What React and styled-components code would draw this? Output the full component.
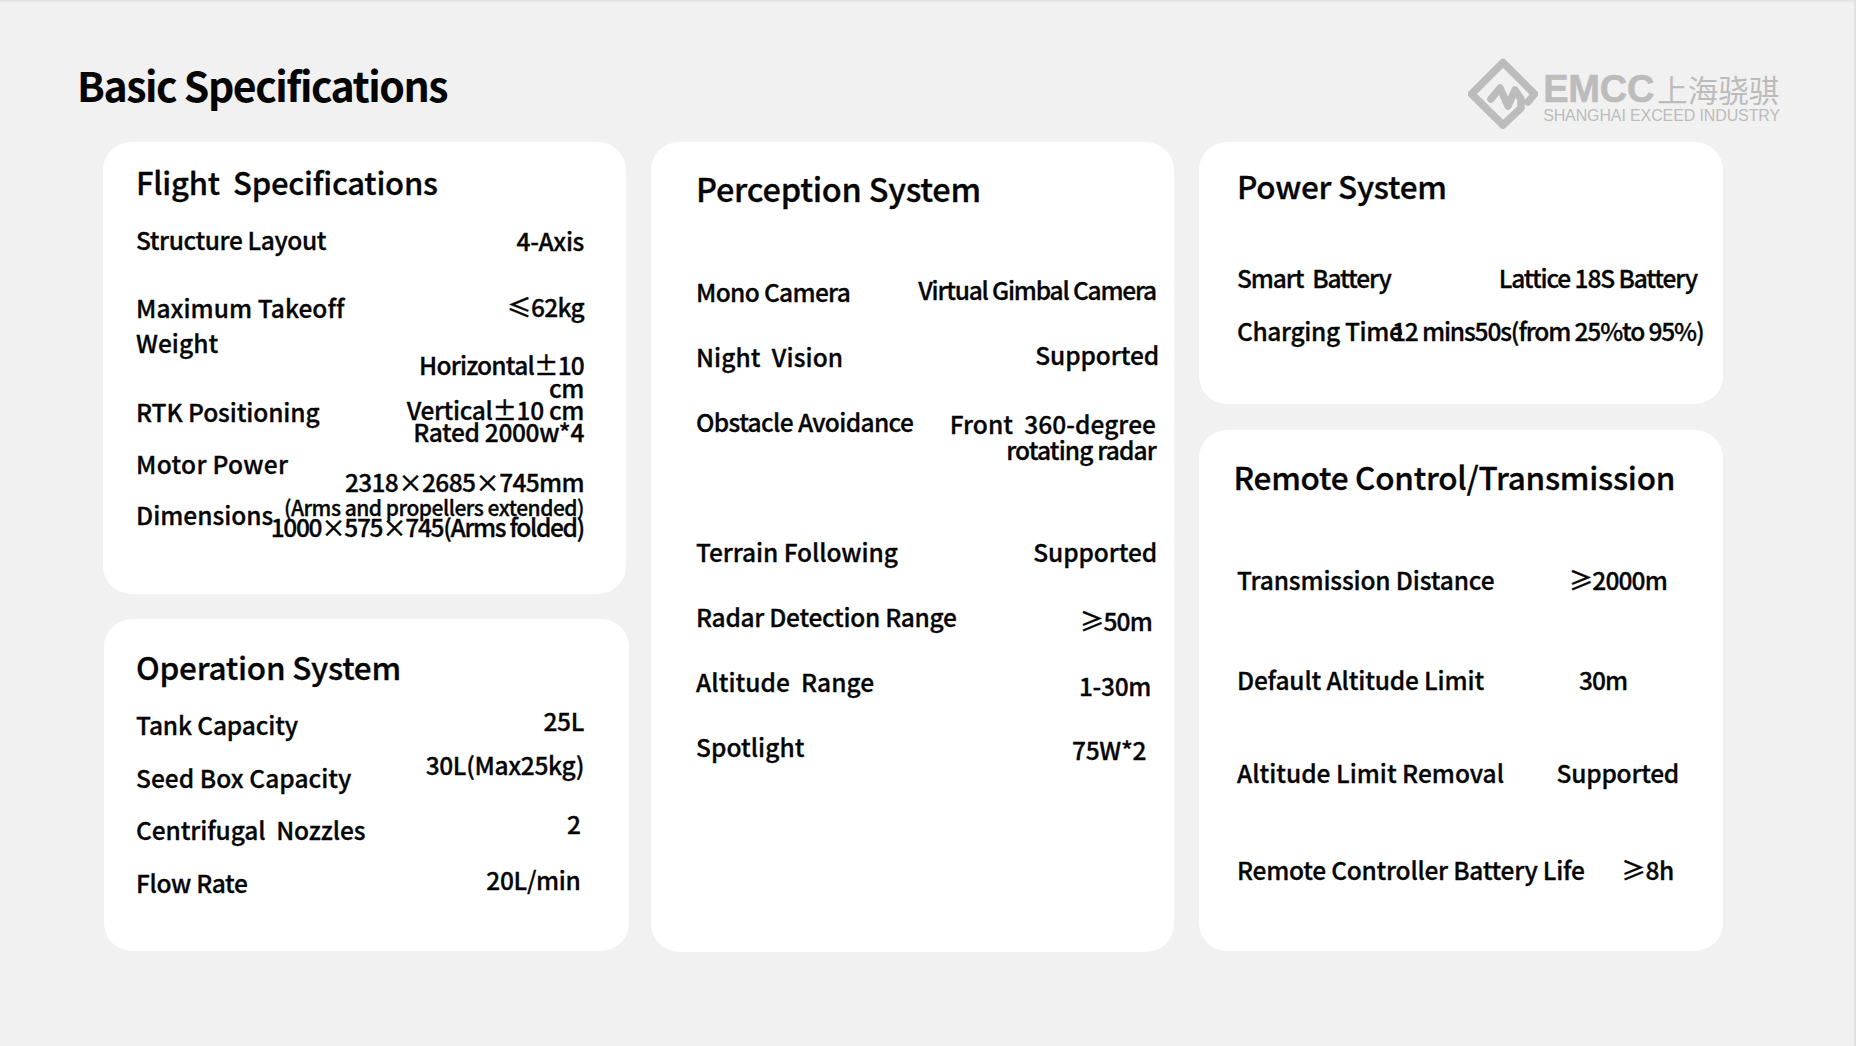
import React from "react";
import styled, { createGlobalStyle } from "styled-components";

const GlobalStyle = createGlobalStyle`
  html, body { margin: 0; padding: 0; background: #f1f1f1; }
  * { box-sizing: border-box; }
`;

const Page = styled.div`
  width: 1856px;
  height: 1046px;
  overflow: hidden;
  background: #f1f1f1;
  box-shadow: inset 0 3px 3px -2px #dcdcdc, inset -2px 0 0 #e2e2e2;
  color: #050505;
  font-family: "Noto Sans CJK SC", "Noto Sans", sans-serif;
`;

const Header = styled.header`
  height: 142px;
  display: flex;
  justify-content: space-between;
  padding: 58px 76px 0 77px;
`;

const Title = styled.h1`
  margin: -3px 0 0;
  font-size: 41px;
  line-height: 58px;
  font-weight: 700;
  letter-spacing: -1.5px;
`;

const Logo = styled.div`
  display: flex;
  gap: 5px;
  height: 71px;
  color: #bcbcbc;
`;

const LogoText = styled.div`
  display: flex;
  flex-direction: column;
  padding-top: 12px;
`;

const LogoMain = styled.div`
  display: flex;
  height: 38px;
  line-height: 38px;
  white-space: nowrap;
`;

const LogoBrand = styled.span`
  font-family: "Liberation Sans", sans-serif;
  font-size: 38px;
  font-weight: 700;
  letter-spacing: -0.2px;
  -webkit-text-stroke: 0.6px #bcbcbc;
`;

const LogoCn = styled.span`
  margin-left: 3px;
  font-size: 30.5px;
  font-weight: 400;
`;

const LogoSub = styled.div`
  margin-top: -2px;
  font-family: "Liberation Sans", sans-serif;
  font-size: 16px;
  line-height: 20px;
  letter-spacing: -0.12px;
  white-space: nowrap;
`;

const Board = styled.main`
  display: flex;
  padding-left: 103px;
`;

const Column = styled.div`
  display: flex;
  flex-direction: column;
  gap: ${(p) => p.$gap || 25}px;
  width: ${(p) => p.$w}px;
  margin-left: ${(p) => p.$ml || 0}px;
`;

const Card = styled.section`
  height: ${(p) => p.$h}px;
  width: ${(p) => p.$w || 523}px;
  margin-left: ${(p) => p.$ml || 0}px;
  padding: ${(p) => p.$pt}px ${(p) => p.$pr}px 0 ${(p) => p.$pl}px;
  background: #ffffff;
  border-radius: 28px;
`;

const CardTitle = styled.h2`
  margin: 0 0 ${(p) => p.$mb}px ${(p) => p.$ml || 0}px;
  font-size: ${(p) => p.$fs || 31.5}px;
  line-height: 40px;
  font-weight: 500;
  letter-spacing: -0.25px;
  white-space: pre;
  -webkit-text-stroke: 0.3px currentColor;
`;

const Row = styled.div`
  display: flex;
  justify-content: space-between;
  align-items: flex-start;
  height: ${(p) => p.$h}px;
  font-size: 24.5px;
  font-weight: 500;
  -webkit-text-stroke: 0.3px currentColor;
`;

const Label = styled.div`
  line-height: ${(p) => p.$lh || 30}px;
  margin-top: ${(p) => p.$mt || 0}px;
  letter-spacing: ${(p) => p.$ls ?? -0.35}px;
  white-space: pre;
  flex-shrink: 0;
`;

const Value = styled.div`
  line-height: ${(p) => p.$lh || 30}px;
  margin: ${(p) => p.$mt || 0}px ${(p) => p.$mr || 0}px 0 -120px;
  letter-spacing: ${(p) => p.$ls ?? -0.35}px;
  text-align: right;
  white-space: pre;
  flex-shrink: 0;
`;

const Line = styled.span`
  display: block;
  letter-spacing: ${(p) => p.$ls}px;
`;

const Small = styled.span`
  display: block;
  margin: 3px 0 -2px;
  font-size: 21px;
  line-height: 22px;
  letter-spacing: -0.5px;
`;

function LogoMark() {
  return (
    <svg width="70" height="71" viewBox="0 0 70 71" fill="none" stroke="#bcbcbc" strokeWidth="7.5" strokeLinecap="round" strokeLinejoin="round">
      <path d="M23 41 L32 30 L40 48 L47 32 L53 41 L53 50 L35 67 L3.5 36 L35 4.5 L66.5 36 L60 44" />
    </svg>
  );
}

function Spec({ label, value, h, labelLh, labelTop, labelLs, lh, top, right, ls }) {
  return (
    <Row $h={h}>
      <Label $lh={labelLh} $mt={labelTop} $ls={labelLs}>{label}</Label>
      <Value $lh={lh} $mt={top} $mr={right} $ls={ls}>{value}</Value>
    </Row>
  );
}

export default function App() {
  return (
    <Page lang="zh-CN">
      <GlobalStyle />
      <Header>
        <Title>Basic Specifications</Title>
        <Logo>
          <LogoMark />
          <LogoText>
            <LogoMain>
              <LogoBrand>EMCC</LogoBrand>
              <LogoCn>上海骁骐</LogoCn>
            </LogoMain>
            <LogoSub>SHANGHAI EXCEED INDUSTRY</LogoSub>
          </LogoText>
        </Logo>
      </Header>
      <Board>
        <Column $w={526}>
          <Card $h={452} $pt={19.5} $pl={33} $pr={42}>
            <CardTitle $mb={23.5} $fs={31}>{"Flight  Specifications"}</CardTitle>
            <Spec h={67} label="Structure Layout" labelLs={-0.4} value="4-Axis" top={0.5} />
            <Spec h={105} label={"Maximum Takeoff\nWeight"} labelLs={0.05} labelLh={35} labelTop={-2.5} value="≤62kg" ls={-0.7} />
            <Spec
              h={52}
              label="RTK Positioning"
              labelLs={-0.1}
              lh={22.5}
              top={-43}
              value={
                <>
                  <Line $ls={-0.8}>Horizontal±10</Line>
                  <Line $ls={-0.35}>cm</Line>
                  <Line $ls={-0.35}>Vertical±10 cm</Line>
                </>
              }
            />
            <Spec h={51} label="Motor Power" labelLs={0.3} top={-32} value="Rated 2000w*4" />
            <Spec
              h={30}
              label="Dimensions"
              labelLs={0}
              lh={22}
              top={-29}
              value={
                <>
                  <Line $ls={-0.65}>2318×2685×745mm</Line>
                  <Small>(Arms and propellers extended)</Small>
                  <Line $ls={-1.35}>1000×575×745(Arms folded)</Line>
                </>
              }
            />
          </Card>
          <Card $h={332} $w={525} $ml={1} $pt={26.6} $pl={32} $pr={45}>
            <CardTitle $mb={24.4}>Operation System</CardTitle>
            <Spec h={53} label="Tank Capacity" labelLs={-0.15} value="25L" top={-4} />
            <Spec h={52} label="Seed Box Capacity" labelLs={0.05} value="30L(Max25kg)" top={-13} />
            <Spec h={53} label={"Centrifugal  Nozzles"} labelLs={-0.1} value="2" top={-6} right={3.5} />
            <Spec h={30} label="Flow Rate" value="20L/min" top={-3} right={3.5} />
          </Card>
        </Column>
        <Column $w={523} $ml={22}>
          <Card $h={810} $pt={26.2} $pl={45} $pr={16}>
            <CardTitle $mb={68.4} $fs={32.5}>Perception System</CardTitle>
            <Spec h={65.3} label="Mono Camera" labelLs={-0.67} value="Virtual Gimbal Camera" ls={-1.2} top={-1.2} right={2} />
            <Spec h={65} label={"Night  Vision"} labelLs={0.1} value="Supported" ls={-0.1} top={-2.3} right={-1} />
            <Spec
              h={130}
              label="Obstacle Avoidance"
              labelLs={-0.63}
              lh={25.7}
              top={4.1}
              right={2}
              value={
                <>
                  <Line $ls={0.05}>{"Front  360-degree"}</Line>
                  <Line $ls={-0.85}>rotating radar</Line>
                </>
              }
            />
            <Spec h={65} label="Terrain Following" labelLs={-0.07} value="Supported" ls={-0.1} right={1} />
            <Spec h={65} label="Radar Detection Range" labelLs={-0.3} value="≥50m" ls={-0.85} top={4} right={6} />
            <Spec h={65} label={"Altitude  Range"} labelLs={0.05} value="1-30m" top={4} right={7} />
            <Spec h={30} label="Spotlight" labelLs={0.05} value="75W*2" top={2.7} right={12} />
          </Card>
        </Column>
        <Column $w={524} $ml={25} $gap={26}>
          <Card $h={262} $w={524} $pt={23.4} $pl={38} $pr={19.5}>
            <CardTitle $mb={57.8}>Power System</CardTitle>
            <Spec h={52.7} label={"Smart  Battery"} labelLs={-1.1} value="Lattice 18S Battery" ls={-1.1} top={0.3} right={6.5} />
            <Spec h={30} label="Charging Time" value="12 mins50s(from 25%to 95%)" ls={-1.15} top={0.3} />
          </Card>
          <Card $h={521} $w={524} $pt={26} $pl={38} $pr={19.5}>
            <CardTitle $mb={69} $ml={-3.5}>Remote Control/Transmission</CardTitle>
            <Spec h={100} label="Transmission Distance" labelLs={-0.15} value="≥2000m" ls={-0.85} right={36.5} />
            <Spec h={93} label="Default Altitude Limit" labelLs={-0.15} value="30m" ls={-1} right={76.5} />
            <Spec h={97} label="Altitude Limit Removal" labelLs={0} value="Supported" ls={-0.25} right={24.5} />
            <Spec h={30} label="Remote Controller Battery Life" labelLs={-0.25} value="≥8h" ls={-0.3} right={29.5} />
          </Card>
        </Column>
      </Board>
    </Page>
  );
}
